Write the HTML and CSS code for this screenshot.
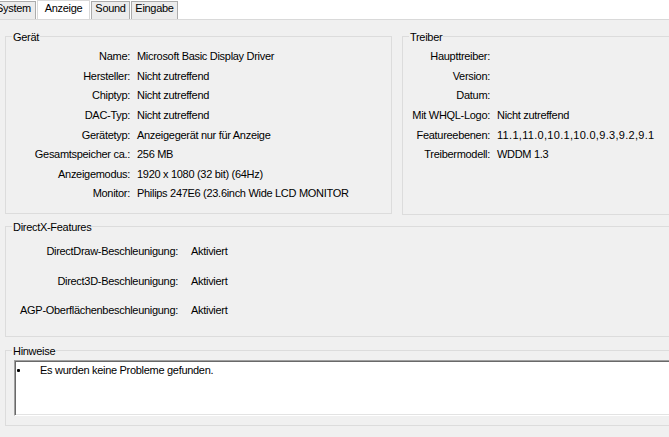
FILE: index.html
```html
<!DOCTYPE html>
<html lang="de">
<head>
<meta charset="utf-8">
<title>DirectX-Diagnoseprogramm – Anzeige</title>
<link rel="stylesheet" href="styles.css">
</head>
<body>
<div class="tabs">
  <div class="tab tab-system">System</div>
  <div class="tab tab-anzeige active">Anzeige</div>
  <div class="tab tab-sound">Sound</div>
  <div class="tab tab-eingabe">Eingabe</div>
</div>
<div class="page">
  <div class="top-row">
    <section class="group geraet">
      <div class="group-title">Gerät</div>
      <div class="props props-geraet">
        <span class="label">Name:</span><span class="value">Microsoft Basic Display Driver</span>
        <span class="label">Hersteller:</span><span class="value">Nicht zutreffend</span>
        <span class="label">Chiptyp:</span><span class="value">Nicht zutreffend</span>
        <span class="label">DAC-Typ:</span><span class="value">Nicht zutreffend</span>
        <span class="label">Gerätetyp:</span><span class="value">Anzeigegerät nur für Anzeige</span>
        <span class="label">Gesamtspeicher ca.:</span><span class="value">256 MB</span>
        <span class="label">Anzeigemodus:</span><span class="value">1920 x 1080 (32 bit) (64Hz)</span>
        <span class="label">Monitor:</span><span class="value">Philips 247E6 (23.6inch Wide LCD MONITOR</span>
      </div>
    </section>
    <section class="group treiber">
      <div class="group-title">Treiber</div>
      <div class="props props-treiber">
        <span class="label">Haupttreiber:</span><span class="value"></span>
        <span class="label">Version:</span><span class="value"></span>
        <span class="label">Datum:</span><span class="value"></span>
        <span class="label">Mit WHQL-Logo:</span><span class="value">Nicht zutreffend</span>
        <span class="label">Featureebenen:</span><span class="value wide">11.1,11.0,10.1,10.0,9.3,9.2,9.1</span>
        <span class="label">Treibermodell:</span><span class="value">WDDM 1.3</span>
      </div>
    </section>
  </div>
  <section class="group features">
    <div class="group-title">DirectX-Features</div>
    <div class="props props-features">
      <span class="label">DirectDraw-Beschleunigung:</span><span class="value">Aktiviert</span>
      <span class="label">Direct3D-Beschleunigung:</span><span class="value">Aktiviert</span>
      <span class="label">AGP-Oberflächenbeschleunigung:</span><span class="value">Aktiviert</span>
    </div>
  </section>
  <section class="group hinweise">
    <div class="group-title">Hinweise</div>
    <div class="notes">
      <div class="note"><span class="dot"></span><span class="note-text">Es wurden keine Probleme gefunden.</span></div>
    </div>
  </section>
</div>
</body>
</html>
```
FILE: styles.css
```css
html, body {
  margin: 0;
  padding: 0;
}
body {
  width: 669px;
  height: 437px;
  overflow: hidden;
  background: #f0f0f0;
  color: #000;
  font-family: "Liberation Sans", Arial, sans-serif;
  font-size: 11px;
  letter-spacing: -0.3px;
}

/* ---- tab strip ---- */
.tabs {
  display: flex;
  align-items: flex-start;
  height: 19px;
  background: #fff;
}
.tab {
  box-sizing: border-box;
  height: 18px;
  margin-top: 1px;
  border: 1px solid #acacac;
  border-bottom: 0;
  background: #ececec;
  line-height: 13px;
  text-align: center;
  white-space: nowrap;
  flex: none;
}
.tab + .tab {
  margin-left: 1px;
}
.tab.active {
  height: 19px;
  margin-top: 0;
  padding-top: 1px;
  background: #fff;
  border-color: #d9d9d9;
}
.tab-system { width: 45px; margin-left: -9px; }
.tab-anzeige { width: 53px; }
.tab-sound { width: 39px; }
.tab-eingabe { width: 47px; }

/* ---- page ---- */
.page {
  border-top: 1px solid #d9d9d9;
  padding-left: 5px;
}
.top-row {
  display: flex;
  align-items: flex-start;
  gap: 10px;
  margin-top: 16px;
}
.group {
  box-sizing: border-box;
  border: 1px solid #dcdcdc;
  flex: none;
}
.group-title {
  width: max-content;
  margin: -6px 0 0 6px;
  padding: 0 1px;
  line-height: 12px;
  background: #f0f0f0;
}
.geraet { width: 387px; height: 178px; }
.treiber { width: 420px; height: 179px; }
.features { width: 800px; height: 111px; margin-top: 11px; }
.hinweise { width: 800px; height: 76px; margin-top: 13px; }

.props {
  display: grid;
  white-space: nowrap;
}
.props .label { text-align: right; }
.props-geraet {
  grid-template-columns: 124px auto;
  column-gap: 7px;
  grid-auto-rows: 19.6px;
  line-height: 19.6px;
  padding-top: 4.2px;
}
.props-treiber {
  grid-template-columns: 87px auto;
  column-gap: 7px;
  grid-auto-rows: 19.6px;
  line-height: 19.6px;
  padding-top: 4.2px;
}
.props-features {
  grid-template-columns: 172px auto;
  column-gap: 13px;
  grid-auto-rows: 29.5px;
  line-height: 29.5px;
  padding-top: 4px;
}
.value.wide { letter-spacing: 0.3px; }

/* ---- notes box ---- */
.notes {
  box-sizing: border-box;
  height: 56px;
  margin: 3px 0 0 8px;
  background: #fff;
  border: 1px solid;
  border-color: #a0a0a0 #ffffff #ffffff #a0a0a0;
  box-shadow: inset 1px 1px 0 #696969, inset -1px -1px 0 #e3e3e3;
  padding-top: 2px;
}
.note {
  display: flex;
  align-items: center;
  line-height: 14px;
}
.dot {
  width: 3px;
  height: 3px;
  margin-left: 2px;
  background: #000;
  border-radius: 1px;
  flex: none;
}
.note-text {
  margin-left: 20px;
}
```
